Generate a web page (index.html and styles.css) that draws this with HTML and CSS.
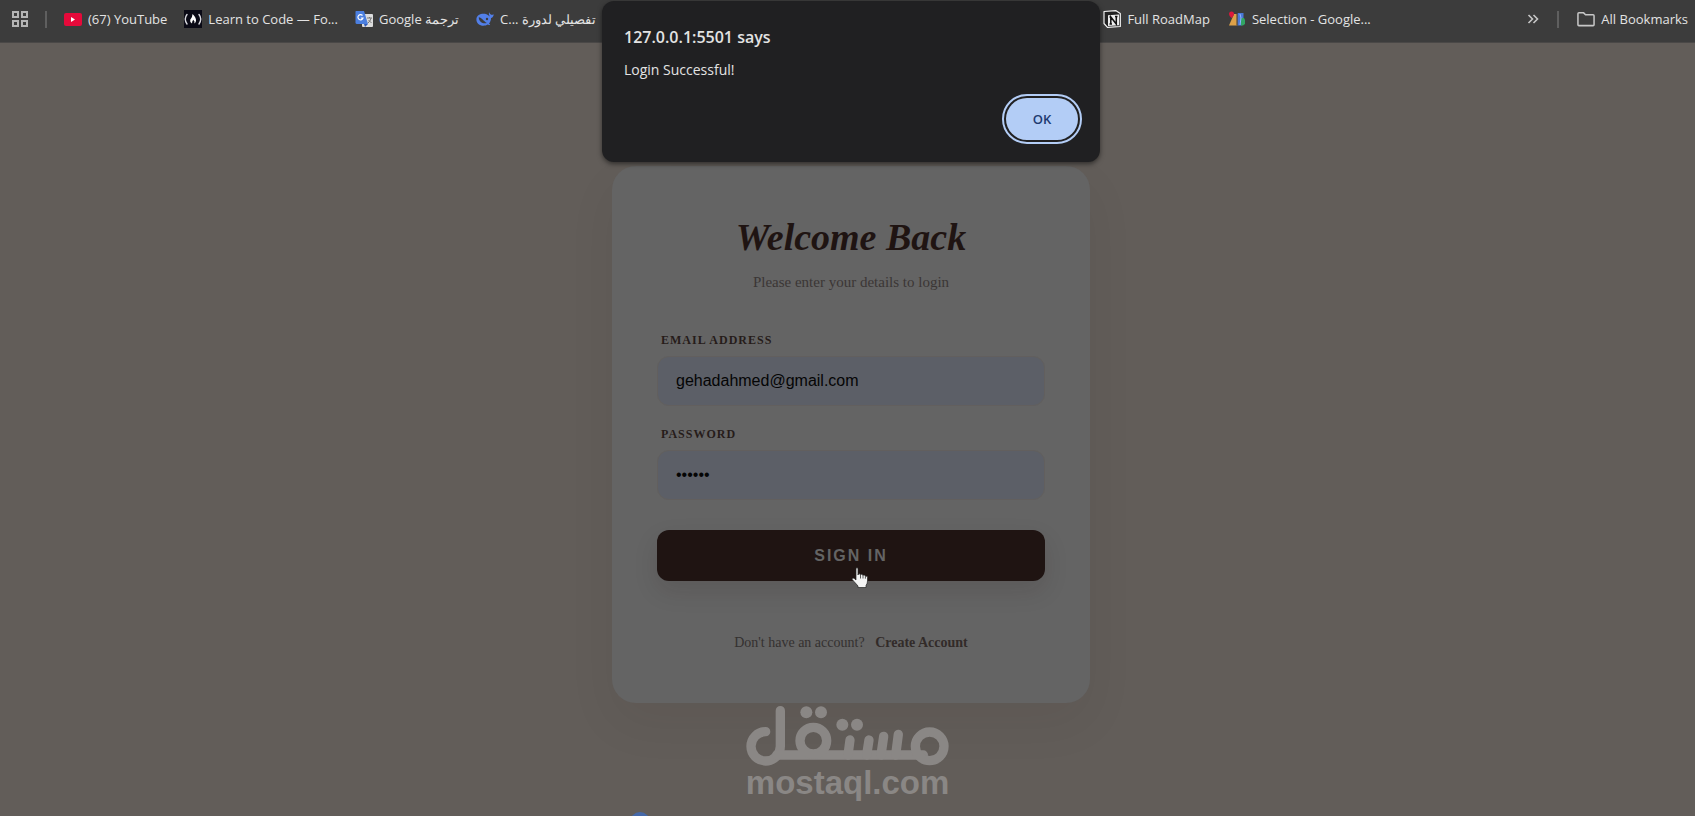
FILE: index.html
```html
<!DOCTYPE html>
<html lang="en">
<head>
    <meta charset="UTF-8">
    <meta name="viewport" content="width=device-width, initial-scale=1.0">
    <title>Login</title>
    <link rel="stylesheet" href="styles.css">
</head>
<body>
    <nav class="bookmarks" aria-label="Bookmarks">
        <div class="bookmarks-left">
            <button class="icon-btn" aria-label="Apps">
                <svg width="16" height="16" viewBox="0 0 16 16" fill="none" stroke="#b4b4b4" stroke-width="2"><path d="M1 1h5v5H1zM10 1h5v5h-5zM1 10h5v5H1zM10 10h5v5h-5z"/></svg>
            </button>
            <span class="divider"></span>
            <a href="#" class="bookmark">
                <svg width="18" height="18" viewBox="0 0 18 18"><rect y="3" width="18" height="13" rx="2" fill="#e6093a"/><path d="M7 7l4 2.500-4 2.500z" fill="#fff"/></svg>
                <span>(67) YouTube</span>
            </a>
            <a href="#" class="bookmark">
                <svg width="18" height="18" viewBox="0 0 18 18"><rect width="18" height="18" fill="#0a0a16"/><g fill="none" stroke="#d8d8de" stroke-width="1.400" stroke-linecap="round"><path d="M3 4.500Q-.5 9 3 14M15 4.500Q18.500 9 15 14"/></g><path d="M8.500 4C10.500 6 12.500 8.500 12 11Q11.700 12.800 10.300 13.500Q11.300 11.500 9.200 9.800Q8 11.500 8 13.500Q5.600 12.300 6.200 9.800Q8.500 7.500 8.500 4z" fill="#fff"/></svg>
                <span>Learn to Code — Fo...</span>
            </a>
            <a href="#" class="bookmark">
                <svg width="18" height="18" viewBox="0 0 18 18"><rect x="7" y="4" width="11" height="13" rx="1" fill="#dcdcdc"/><path d="M1 1h8l4 13H2q-1.500 0-1.500-1.500V2q0-1 .5-1z" fill="#4b7fe0"/><path d="M9 14h4l-3 3z" fill="#3059b5"/><path d="M7.500 5.500A2.600 2.600 0 1 0 8 8H5.800" fill="none" stroke="#fff" stroke-width="1.200"/><path d="M12 8h5M14.500 7v1M16 8q-.5 3-3 5M13.500 10l3 3" fill="none" stroke="#777" stroke-width="1"/></svg>
                <span>Google ترجمة</span>
            </a>
            <a href="#" class="bookmark">
                <svg width="18" height="18" viewBox="0 0 18 18"><path d="M17.700 4.200c-.8.5-1.700.7-2.500.5-1-.3-1.700-1.200-2-2.400-.6 1.400-.3 3 .8 4.200-1.200-.7-2.300-2-3.500-2.300C6 3 .8 4.500.4 9c-.3 4 3.200 6.800 7 6.800 1.800 0 3-.4 4.200-1.200.7.400 1.700.6 2.600.2l-1.200-1.300c1.500-1.800 2-3.500 2-5.500 1.500-.3 2.600-1.600 2.700-3.800z" fill="#527fe8"/><path d="M2.800 7.200c3 .2 4.700 3.800 8 5.800-3.500 1-8.300-1.200-8-5.800z" fill="#3c3c3c"/><circle cx="11" cy="9" r="1.200" fill="#3c3c3c"/></svg>
                <span>C... تفصيلي لدورة</span>
            </a>
        </div>
        <div class="bookmarks-middle">
            <a href="#" class="bookmark">
                <svg width="18" height="18" viewBox="0 0 18 18"><path d="M1 1.500L13 .7 17.300 3.500V16.500L4.500 17.300 1 13.500z" fill="#222" stroke="#f4f4f4" stroke-width="1.200" stroke-linejoin="round"/><path d="M5 5.200L16 4.500V15.300L5 16z" fill="#eee"/><path d="M7.800 14V7l5.500 7V6.500M6.500 7h2M12 6.500h2.500M6.500 14h2.500" fill="none" stroke="#111" stroke-width="1.500"/></svg>
                <span>Full RoadMap</span>
            </a>
            <a href="#" class="bookmark">
                <svg width="18" height="18" viewBox="0 0 18 18"><path d="M6 4h3.500v11.500H1z" fill="#dda148"/><path d="M9.500 3h6v7l-2 5.500h-4z" fill="#4978d8"/><path d="M1 4a2 2 0 0 1 5 0q0 2-2.500 4Q1 6 1 4z" fill="#dc183c"/><path d="M13 8h3l1 2v4l-2 1.500h-2z" fill="#31a564"/><path d="M9 3v12.500" stroke="#3c3c3c"/><path d="M12 4l1 4-1 7" fill="none" stroke="#91b6ff" stroke-width="1"/></svg>
                <span>Selection - Google...</span>
            </a>
        </div>
        <div class="bookmarks-right">
            <button class="icon-btn" aria-label="More bookmarks">
                <svg width="12" height="12" viewBox="0 0 12 12" fill="none" stroke="#c7c7c7" stroke-width="1.600"><path d="M1.500 2l4 4-4 4M6.500 2l4 4-4 4"/></svg>
            </button>
            <span class="divider"></span>
            <a href="#" class="bookmark">
                <svg width="18" height="18" viewBox="0 0 19 18" fill="none" stroke="#c7c7c7" stroke-width="1.600" stroke-linejoin="round"><path d="M1 3.500q0-1 1-1h5l2 2h8q1 0 1 1V15q0 1-1 1H2q-1 0-1-1z"/></svg>
                <span>All Bookmarks</span>
            </a>
        </div>
    </nav>

    <main class="page">
        <div class="login-card">
            <h1>Welcome Back</h1>
            <p class="subtitle">Please enter your details to login</p>
            <form>
                <div class="input-group">
                    <label for="email">Email Address</label>
                    <input type="email" id="email" value="gehadahmed@gmail.com">
                </div>
                <div class="input-group">
                    <label for="password">Password</label>
                    <input type="password" id="password" value="gehad1">
                </div>
                <button type="button" class="login-btn">
                    SIGN IN
                    <svg class="pointer" width="18" height="22" viewBox="0 0 18 22"><path d="M5 1.800Q5 .7 6 .7T7 1.800V8Q7.200 6.700 8.300 6.800T9.500 8Q9.700 7 10.800 7.200T12 8.500Q12.300 7.800 13.300 8T14.400 9.200Q16.500 8.800 16.500 10.500V14Q16.500 16.500 15 18.500V20.500H7V19L3 14.500 1.200 12.500Q1 10.800 3 11.200L5 13z" fill="#f4f4f4" stroke="#222" stroke-width=".7"/><path d="M9.500 8v3.500M12 8.500v3M14.400 9.200v2.500" stroke="#333" stroke-width=".8"/></svg>
                </button>
            </form>
            <p class="register">Don't have an account? <a href="#">Create Account</a></p>
        </div>
    </main>

    <div class="overlay">
        <dialog class="alert" open aria-labelledby="alert-title">
            <h2 id="alert-title">127.0.0.1:5501 says</h2>
            <p>Login Successful!</p>
            <button class="ok-btn">OK</button>
        </dialog>
    </div>

    <div class="watermark">
        <svg viewBox="78 48 609 180" role="img" aria-label="مستقل">
            <g fill="none" stroke="currentColor" stroke-width="28" stroke-linecap="round" stroke-linejoin="round">
                <path d="M137 125A44 44 0 1 0 181 169V62"/>
                <path d="M170 195H610"/>
                <circle cx="280" cy="152" r="40"/>
                <circle cx="629" cy="169" r="43"/>
                <path d="M390 150L384 195M447 150L440 195M491 139L483 195M535 133L527 195"/>
            </g>
            <g fill="currentColor">
                <circle cx="259" cy="67" r="18"/>
                <circle cx="303" cy="67" r="18"/>
                <circle cx="367" cy="104" r="18"/>
                <circle cx="411" cy="104" r="18"/>
            </g>
        </svg>
        <span>mostaql.com</span>
    </div>
    <span class="loader"></span>
</body>
</html>
```
FILE: styles.css
```css
* {
    box-sizing: border-box;
    margin: 0;
    padding: 0;
}
body {
    position: relative;
    display: flex;
    flex-direction: column;
    height: 100vh;
    overflow: hidden;
    background-color: #625d59;
    font-family: "Liberation Serif", "Times New Roman", serif;
}

/* bookmarks bar */
.bookmarks {
    display: flex;
    flex-shrink: 0;
    height: 43px;
    padding: 0 7px 4px 12px;
    background-color: #3c3c3c;
    border-bottom: 1px solid #4a4847;
    font-family: "Open Sans", "Noto Sans", sans-serif;
    font-size: 13px;
}
.bookmarks-left,
.bookmarks-middle,
.bookmarks-right {
    display: flex;
    align-items: center;
    gap: 18px;
}
.bookmarks-left {
    width: 65%;
    gap: 17px;
}
.bookmarks-middle {
    flex: 1;
    padding-left: 2px;
}
.bookmark {
    display: flex;
    align-items: center;
    gap: 6px;
    color: #e3e3e3;
    text-decoration: none;
    white-space: nowrap;
}
.bookmark svg {
    flex-shrink: 0;
}
.icon-btn {
    display: flex;
    border: none;
    background: none;
}
.divider {
    width: 2px;
    height: 17px;
    background-color: #5f5f5f;
}

/* login form */
.page {
    display: flex;
    flex: 1;
    justify-content: center;
    align-items: flex-start;
    padding: 123px 0 0 7px;
}
.login-card {
    width: 478px;
    padding: 48px 45px 50px;
    border-radius: 24px;
    background-color: #646464;
    box-shadow: 0 20px 50px rgba(30, 20, 18, 0.06);
    text-align: center;
}
.login-card h1 {
    color: #1f1412;
    font-size: 38px;
    font-style: italic;
    line-height: 46px;
}
.subtitle {
    margin: 12px 0 40px;
    color: #3b3635;
    font-size: 15px;
    line-height: 20px;
}
.input-group {
    display: flex;
    flex-direction: column;
    gap: 8px;
    margin-bottom: 20px;
    text-align: left;
}
.input-group label {
    padding-left: 4px;
    color: #261c1a;
    font-size: 12px;
    font-weight: bold;
    line-height: 16px;
    letter-spacing: 1px;
    text-transform: uppercase;
}
.input-group input {
    width: 100%;
    height: 50px;
    padding: 0 18px;
    border: 1px solid #625f5e;
    border-radius: 12px;
    background-color: #5c5f67;
    color: #050505;
    font-family: "Liberation Sans", Arial, sans-serif;
    font-size: 16px;
}
.login-btn {
    position: relative;
    width: 100%;
    height: 51px;
    margin-top: 10px;
    border: none;
    border-radius: 12px;
    background-color: #1f1412;
    box-shadow: 0 10px 25px rgba(31, 20, 18, 0.12);
    color: #646464;
    font-family: "Liberation Sans", Arial, sans-serif;
    font-size: 16px;
    font-weight: bold;
    letter-spacing: 2px;
    cursor: pointer;
}
.pointer {
    position: absolute;
    top: 37px;
    left: 50%;
}
.register {
    margin-top: 52px;
    color: #343130;
    font-size: 14px;
    line-height: 20px;
}
.register a {
    margin-left: 7px;
    color: #322b29;
    font-weight: bold;
    text-decoration: none;
}

/* alert box */
.overlay {
    position: absolute;
    top: 1px;
    left: 0;
    width: 100%;
    display: flex;
    justify-content: center;
    padding-left: 7px;
}
.alert {
    position: static;
    display: flex;
    flex-direction: column;
    width: 498px;
    margin: 0;
    padding: 24px 22px 22px;
    border: none;
    border-radius: 12px;
    background-color: #202022;
    box-shadow: 0 2px 5px rgba(0, 0, 0, 0.5);
    color: #e3e3e3;
    font-family: "Open Sans", "Noto Sans", sans-serif;
}
.alert h2 {
    font-size: 16px;
    font-weight: 600;
    line-height: 24px;
}
.alert p {
    margin-top: 11px;
    font-size: 14px;
    line-height: 20px;
}
.ok-btn {
    align-self: flex-end;
    width: 72px;
    height: 42px;
    margin-top: 18px;
    border: none;
    border-radius: 21px;
    outline: 2px solid #b3cdf6;
    outline-offset: 2px;
    background-color: #b3cdf6;
    color: #1e3a70;
    font-family: inherit;
    font-size: 13px;
    font-weight: 600;
}

/* watermark and loader lie over the page */
.watermark {
    position: absolute;
    bottom: 16px;
    left: 44%;
    width: 203px;
    color: #8a8785;
    font-family: "Liberation Sans", Arial, sans-serif;
    font-size: 33px;
    font-weight: bold;
    line-height: 34px;
}
.watermark svg,
.watermark span {
    display: block;
}
.loader {
    position: absolute;
    bottom: -16px;
    left: 630px;
    width: 20px;
    height: 20px;
    border-radius: 50%;
    background-color: #4568a8;
}
```
